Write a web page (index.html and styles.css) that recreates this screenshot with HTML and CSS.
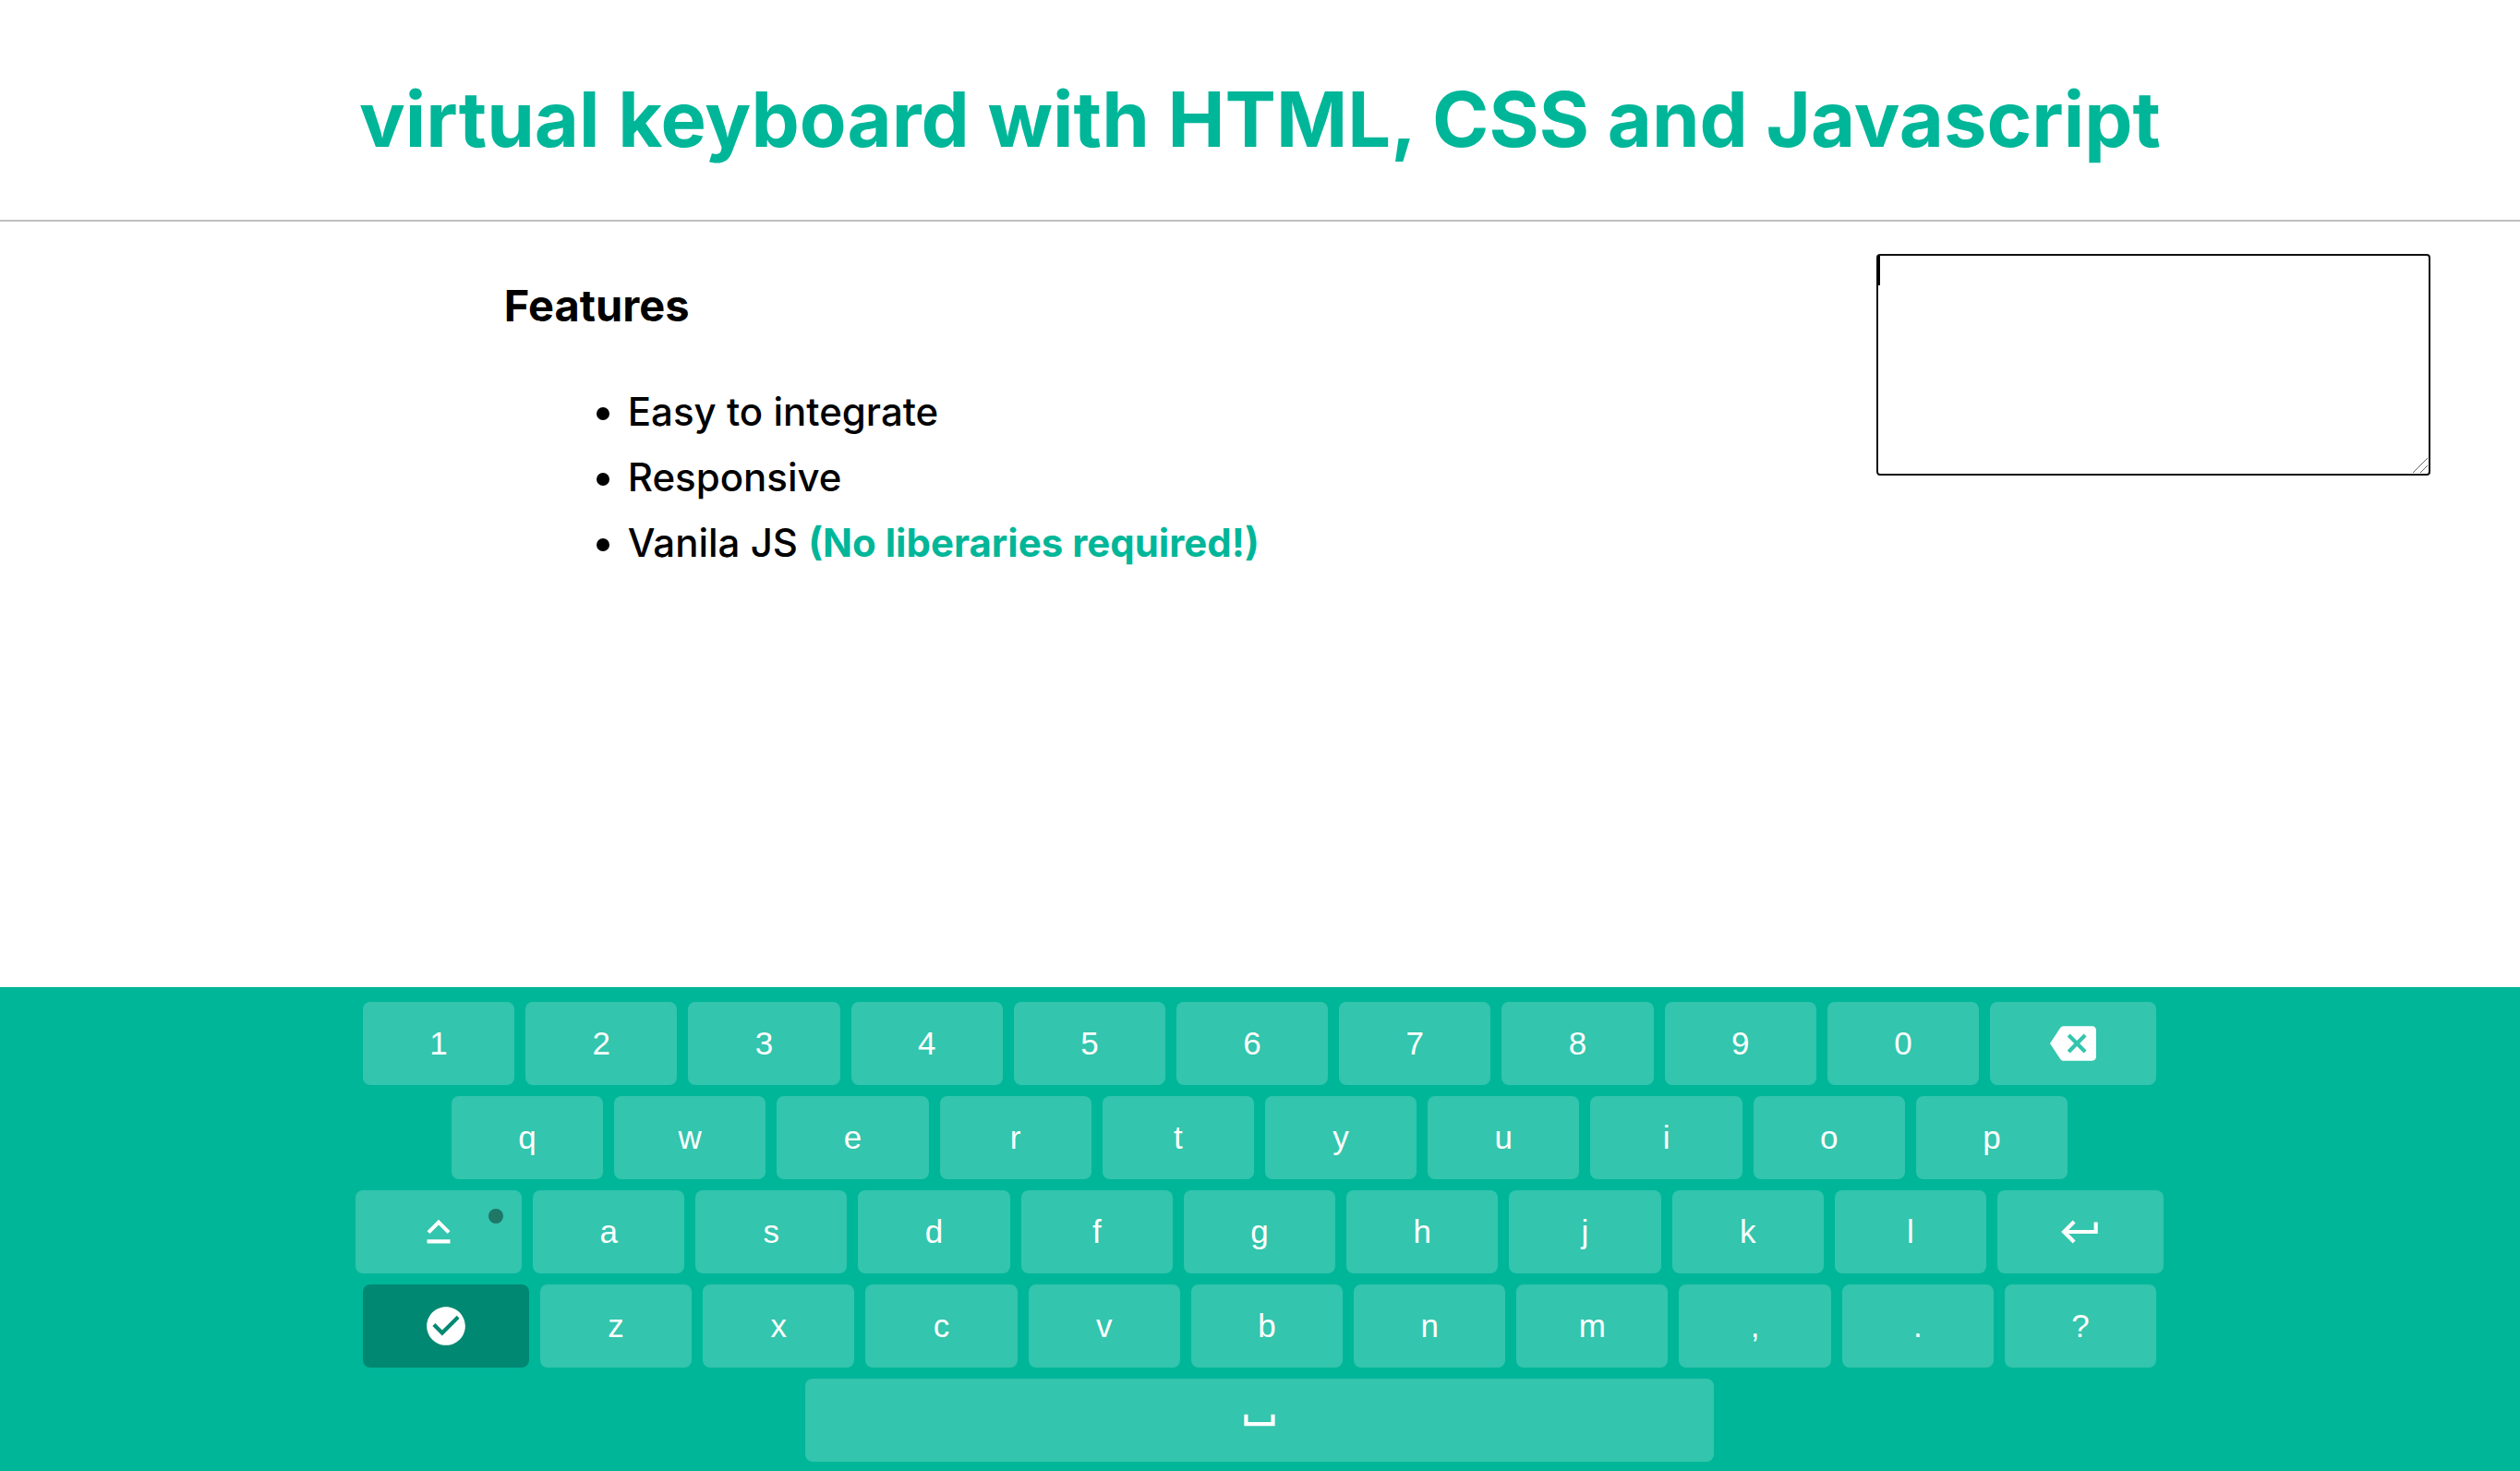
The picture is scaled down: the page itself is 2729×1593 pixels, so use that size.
FILE: index.html
```html
<!DOCTYPE html>
<html lang="en">
<head>
<meta charset="utf-8">
<title>Virtual keyboard</title>
<link rel="stylesheet" href="styles.css">
</head>
<body>
<header class="header">
  <h1 class="title">virtual keyboard with HTML, CSS and Javascript</h1>
</header>
<main class="main">
  <section class="features">
    <h2 class="features-title">Features</h2>
    <ul class="features-list">
      <li>Easy to integrate</li>
      <li>Responsive</li>
      <li>Vanila JS <strong class="accent">(No liberaries required!)</strong></li>
    </ul>
  </section>
  <div class="field">
    <textarea class="input" aria-label="Text"></textarea>
    <span class="caret"></span>
    <svg class="grip" viewBox="0 0 16 16" aria-hidden="true"><path d="M0 16L16 0M8 16l8-8"/></svg>
  </div>
</main>
<div class="keyboard">
  <div class="row">
    <button class="key">1</button><button class="key">2</button><button class="key">3</button><button class="key">4</button><button class="key">5</button><button class="key">6</button><button class="key">7</button><button class="key">8</button><button class="key">9</button><button class="key">0</button>
    <button class="key wide" aria-label="Backspace"><svg class="icon" viewBox="0 0 24 24"><path d="M22 3H7c-.69 0-1.23.35-1.59.88L0 12l5.41 8.11c.36.53.9.89 1.59.89h15c1.1 0 2-.9 2-2V5c0-1.1-.9-2-2-2zm-3 12.59L17.59 17 14 13.41 10.41 17 9 15.59 12.59 12 9 8.41 10.41 7 14 10.59 17.59 7 19 8.41 15.41 12 19 15.59z"/></svg></button>
  </div>
  <div class="row">
    <button class="key">q</button><button class="key">w</button><button class="key">e</button><button class="key">r</button><button class="key">t</button><button class="key">y</button><button class="key">u</button><button class="key">i</button><button class="key">o</button><button class="key">p</button>
  </div>
  <div class="row">
    <button class="key wide caps" aria-label="Caps lock"><svg class="icon" viewBox="0 0 24 24"><path d="M12 8.41L16.59 13 18 11.59l-6-6-6 6L7.41 13 12 8.41zM6 18h12v-2H6v2z"/></svg></button>
    <button class="key">a</button><button class="key">s</button><button class="key">d</button><button class="key">f</button><button class="key">g</button><button class="key">h</button><button class="key">j</button><button class="key">k</button><button class="key">l</button>
    <button class="key wide" aria-label="Enter"><svg class="icon" viewBox="0 0 24 24"><path d="M19 7v4H5.83l3.58-3.59L8 6l-6 6 6 6 1.41-1.41L5.83 13H21V7z"/></svg></button>
  </div>
  <div class="row">
    <button class="key wide dark" aria-label="Done"><svg class="icon" viewBox="0 0 24 24"><path d="M12 2C6.48 2 2 6.48 2 12s4.48 10 10 10 10-4.48 10-10S17.52 2 12 2zm-2 15l-5-5 1.41-1.41L10 14.17l7.59-7.59L19 8l-9 9z"/></svg></button>
    <button class="key">z</button><button class="key">x</button><button class="key">c</button><button class="key">v</button><button class="key">b</button><button class="key">n</button><button class="key">m</button><button class="key">,</button><button class="key">.</button><button class="key">?</button>
  </div>
  <div class="row">
    <button class="key space" aria-label="Space"><svg class="icon" viewBox="0 0 24 24"><path d="M18 9v4H6V9H4v6h16V9z"/></svg></button>
  </div>
</div>
</body>
</html>
```
FILE: styles.css
```css
* {
  box-sizing: border-box;
}

body {
  display: flex;
  flex-direction: column;
  min-height: 100vh;
  margin: 0;
  background: #fff;
  color: #000;
  font-family: Inter, sans-serif;
}

.header {
  padding: 79px 0 59px;
  border-bottom: 2px solid #c0c0c0;
}

.title {
  margin: 0;
  color: #00b699;
  font-size: 83px;
  font-weight: 700;
  line-height: 100px;
  text-align: center;
}

.main {
  display: flex;
  justify-content: space-between;
  align-items: flex-start;
  padding: 35px 97px 40px 20%;
}

.features-title {
  margin: 26px 0 49px;
  font-size: 47px;
  font-weight: 700;
  line-height: 60px;
}

.features-list {
  margin: 0;
  padding-left: 134px;
  font-size: 42px;
  font-weight: 500;
  line-height: 71px;
}

.accent {
  color: #00b699;
  font-weight: 700;
}

.field {
  position: relative;
  width: 600px;
  height: 240px;
}

.input {
  display: block;
  width: 100%;
  height: 100%;
  padding: 0 2px;
  border: 2px solid #101010;
  border-radius: 4px;
  background: #fff;
  font-size: 28px;
  outline: none;
  resize: none;
}

.caret {
  position: absolute;
  top: 2px;
  left: 1px;
  width: 3px;
  height: 32px;
  background: #000;
}

.grip {
  position: absolute;
  right: 3px;
  bottom: 3px;
  width: 16px;
  height: 16px;
  fill: none;
  stroke: #666;
}

.keyboard {
  display: flex;
  flex-direction: column;
  gap: 12px;
  margin-top: auto;
  padding: 16px 1px 10px 0;
  background: #00b699;
}

.row {
  display: flex;
  justify-content: center;
  gap: 12px;
}

.key {
  position: relative;
  display: flex;
  align-items: center;
  justify-content: center;
  flex: none;
  width: 6.02%;
  height: 90px;
  padding: 0;
  border: 0;
  border-radius: 8px;
  background: #33c5ad;
  color: #fff;
  font: 35px/40px "Liberation Sans", Arial, sans-serif;
}

.wide {
  width: 6.6%;
}

.space {
  width: 36.06%;
}

.dark {
  background: #008872;
}

.caps::after {
  content: "";
  position: absolute;
  top: 20px;
  right: 20px;
  width: 16px;
  height: 16px;
  border-radius: 50%;
  background: #1f7768;
}

.icon {
  width: 50px;
  height: 50px;
  fill: currentColor;
}
```
